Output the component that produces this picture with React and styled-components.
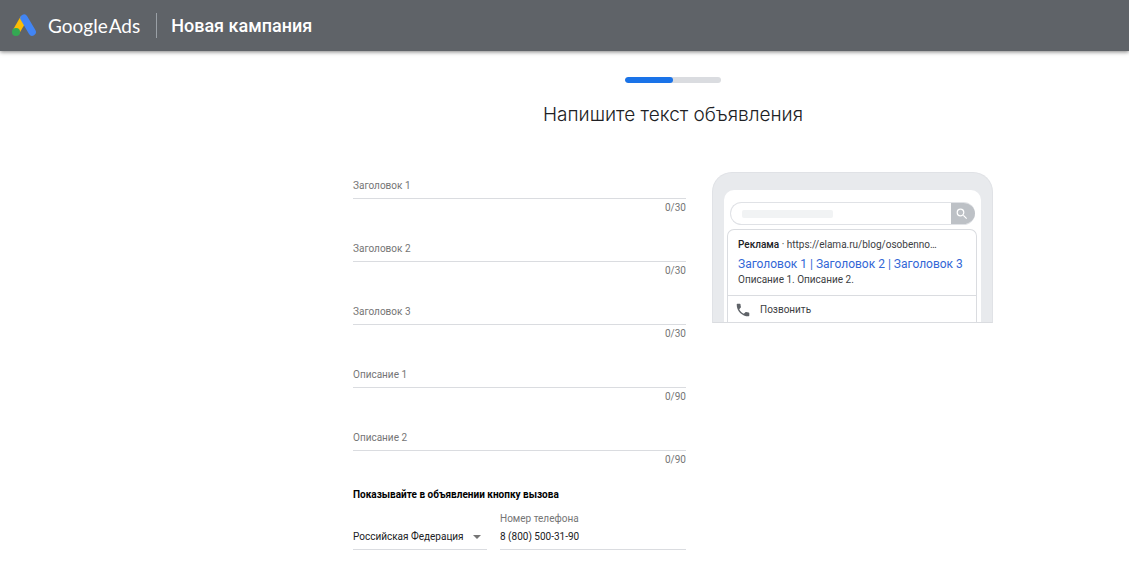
import React, { useState } from "react";
import styled, { createGlobalStyle } from "styled-components";

const GlobalStyle = createGlobalStyle`
    * {
        box-sizing: border-box;
    }
    body {
        margin: 0;
        background-color: #fff;
        color: #202124;
        font-family: Roboto, "Liberation Sans", sans-serif;
        font-size: 10px;
        line-height: 14px;
    }
    input,
    select,
    button {
        font: inherit;
        color: inherit;
    }
`;

const Header = styled.header`
    display: flex;
    align-items: center;
    height: 51px;
    padding: 0 12px;
    background-color: #5f6368;
    color: #fff;
    box-shadow: 0 1px 4px rgba(0, 0, 0, 0.5);
`;

const Logo = styled.a`
    display: flex;
    align-items: center;
    color: inherit;
    text-decoration: none;
`;

const LogoText = styled.span`
    display: flex;
    gap: 1px;
    margin-left: 11px;
    font-family: Lato, sans-serif;
    font-size: 19px;
    line-height: 24px;
`;

const HeaderTitle = styled.h1`
    margin: 0 0 0 16px;
    padding-left: 14px;
    border-left: 1px solid #9aa0a6;
    font-size: 18px;
    font-weight: 500;
    line-height: 25px;
`;

const Main = styled.main`
    padding: 26px 0 24px 217px;
`;

const Content = styled.div`
    max-width: 640px;
    margin: 0 auto;
`;

const Progress = styled.div`
    width: 96px;
    height: 6px;
    margin: 0 auto;
    border-radius: 3px;
    background-color: #dadce0;
    overflow: hidden;
`;

const ProgressBar = styled.div`
    width: ${(props) => (props.$step / props.$total) * 100}%;
    height: 100%;
    border-radius: 3px;
    background-color: #1a73e8;
`;

const StepTitle = styled.h2`
    margin: 19px 0 44px;
    font-family: Inter, Roboto, sans-serif;
    font-size: 19px;
    font-weight: 300;
    line-height: 26px;
    text-align: center;
`;

const Columns = styled.div`
    display: flex;
    align-items: flex-start;
    gap: 26px;
`;

const Form = styled.form`
    flex: 1;
    min-width: 0;
`;

const Field = styled.div`
    position: relative;
    height: 63px;
    color: #757575;
`;

const FieldLabel = styled.label`
    position: absolute;
    top: ${(props) => (props.$raised ? "-8px" : "7px")};
    left: 0;
    pointer-events: none;
`;

const TextInput = styled.input`
    display: block;
    width: 100%;
    height: 27px;
    padding: 0;
    border: none;
    border-bottom: 1px solid #dadce0;
    border-radius: 0;
    background-color: transparent;
    color: #202124;
    outline: none;

    &:focus {
        border-bottom-color: #1a73e8;
    }
`;

const Counter = styled.div`
    margin-top: 2px;
    text-align: right;
`;

const PhoneGroup = styled.fieldset`
    min-width: 0;
    margin: 0;
    padding: 1px 0 0;
    border: none;
`;

const PhoneLegend = styled.legend`
    padding: 1px 0 0;
    font-weight: 700;
    color: #000;
`;

const PhoneRow = styled.div`
    display: flex;
    align-items: flex-end;
    gap: 13px;
    margin-top: 9px;
`;

const SelectBox = styled.div`
    display: flex;
    align-items: center;
    flex: 0 0 134px;
    height: 24px;
    padding-bottom: 2px;
    border-bottom: 1px solid #dadce0;
`;

const Select = styled.select`
    appearance: none;
    width: 100%;
    margin-right: -14px;
    padding: 0 14px 0 0;
    border: none;
    background-color: transparent;
    outline: none;
`;

const Arrow = styled.span`
    margin-right: 5px;
    border: 4px solid transparent;
    border-top-color: #757575;
    border-bottom: none;
    pointer-events: none;
`;

const PhoneField = styled.div`
    flex: 1;
    min-width: 0;
`;

const PhoneLabel = styled.label`
    display: block;
    color: #757575;
`;

const PhoneInput = styled(TextInput)`
    height: 24px;
    padding-bottom: 2px;
`;

const Phone = styled.aside`
    flex: 0 0 281px;
    padding: 17px 11px 0;
    border: 1px solid #e0e2e6;
    border-bottom-color: #dadce0;
    border-radius: 20px 20px 0 0;
    background-color: #e8eaed;
`;

const Screen = styled.div`
    padding: 12px 4px 0 3px;
    border-radius: 10px 10px 0 0;
    background-color: #fff;
`;

const SearchBar = styled.div`
    display: flex;
    align-items: center;
    justify-content: space-between;
    height: 23px;
    margin: 0 2px 4px 3px;
    padding-left: 11px;
    border: 1px solid #e0e2e6;
    border-right: none;
    border-radius: 12px;
    overflow: hidden;
`;

const SearchText = styled.div`
    width: 91px;
    height: 8px;
    border-radius: 2px;
    background-color: #f1f3f4;
`;

const SearchButton = styled.button`
    display: flex;
    align-items: center;
    justify-content: center;
    width: 24px;
    height: 23px;
    padding: 0 2px 0 0;
    border: none;
    background-color: #bdc1c6;
`;

const AdCard = styled.div`
    border: 1px solid #dadce0;
    border-bottom: none;
    border-radius: 7px 7px 0 0;
    color: #3c4043;
`;

const AdBody = styled.div`
    padding: 8px 10px;
`;

const AdUrl = styled.div`
    white-space: nowrap;
    overflow: hidden;
    text-overflow: ellipsis;
`;

const AdBadge = styled.span`
    font-weight: 500;
    color: #202124;
`;

const AdTitle = styled.a`
    display: block;
    margin-top: 3px;
    font-size: 12px;
    line-height: 18px;
    color: #3367d6;
    text-decoration: none;
`;

const CallButton = styled.button`
    display: flex;
    align-items: center;
    gap: 10px;
    width: 100%;
    height: 27px;
    padding: 1px 8px 0;
    border: none;
    border-top: 1px solid #dadce0;
    background-color: transparent;
`;

const FIELDS = [
    { name: "headline1", label: "Заголовок 1", max: 30 },
    { name: "headline2", label: "Заголовок 2", max: 30 },
    { name: "headline3", label: "Заголовок 3", max: 30 },
    { name: "description1", label: "Описание 1", max: 90 },
    { name: "description2", label: "Описание 2", max: 90 },
];

const AdsIcon = () => (
    <svg width="25" height="24" viewBox="0 0 25 24" aria-hidden="true">
        <path d="M3.9 18 11.8 4.4" stroke="#fbbc04" strokeWidth="7.4" />
        <path
            d="M12 4.2 20.2 18"
            stroke="#4285f4"
            strokeWidth="7.4"
            strokeLinecap="round"
        />
        <circle cx="4" cy="18" r="4" fill="#34a853" />
    </svg>
);

const SearchIcon = () => (
    <svg width="12" height="12" viewBox="2 2 20 20" aria-hidden="true">
        <path
            fill="#fff"
            d="M15.5 14h-.79l-.28-.27A6.47 6.47 0 0 0 16 9.5 6.5 6.5 0 1 0 9.5 16c1.61 0 3.09-.59 4.23-1.57l.27.28v.79l5 4.99L20.49 19l-4.99-5zm-6 0C7.01 14 5 11.99 5 9.5S7.01 5 9.5 5 14 7.01 14 9.5 11.99 14 9.5 14z"
        />
    </svg>
);

const CallIcon = () => (
    <svg width="14" height="14" viewBox="2 2 20 20" aria-hidden="true">
        <path
            fill="#5f6368"
            d="M6.62 10.79c1.44 2.83 3.76 5.14 6.59 6.59l2.2-2.2c.27-.27.67-.36 1.02-.24 1.12.37 2.33.57 3.57.57.55 0 1 .45 1 1V20c0 .55-.45 1-1 1-9.39 0-17-7.61-17-17 0-.55.45-1 1-1h3.5c.55 0 1 .45 1 1 0 1.25.2 2.45.57 3.57.11.35.03.74-.25 1.02l-2.2 2.2z"
        />
    </svg>
);

const App = () => {
    const [values, setValues] = useState({});
    const [phone, setPhone] = useState("8 (800) 500-31-90");

    const textOf = (index) => values[FIELDS[index].name] || FIELDS[index].label;

    return (
        <>
            <GlobalStyle />
            <Header>
                <Logo href="#">
                    <AdsIcon />
                    <LogoText>
                        <span>Google</span>
                        <span>Ads</span>
                    </LogoText>
                </Logo>
                <HeaderTitle>Новая кампания</HeaderTitle>
            </Header>
            <Main>
                <Content>
                    <Progress>
                        <ProgressBar $step={1} $total={2} />
                    </Progress>
                    <StepTitle>Напишите текст объявления</StepTitle>
                    <Columns>
                        <Form>
                            {FIELDS.map(({ name, label, max }) => {
                                const value = values[name] || "";
                                return (
                                    <Field key={name}>
                                        <FieldLabel
                                            htmlFor={name}
                                            $raised={value !== ""}
                                        >
                                            {label}
                                        </FieldLabel>
                                        <TextInput
                                            id={name}
                                            maxLength={max}
                                            value={value}
                                            onChange={(e) =>
                                                setValues({
                                                    ...values,
                                                    [name]: e.target.value,
                                                })
                                            }
                                        />
                                        <Counter>{`${value.length}/${max}`}</Counter>
                                    </Field>
                                );
                            })}
                            <PhoneGroup>
                                <PhoneLegend>
                                    Показывайте в объявлении кнопку вызова
                                </PhoneLegend>
                                <PhoneRow>
                                    <SelectBox>
                                        <Select aria-label="Страна">
                                            <option>Российская Федерация</option>
                                        </Select>
                                        <Arrow />
                                    </SelectBox>
                                    <PhoneField>
                                        <PhoneLabel htmlFor="phone">
                                            Номер телефона
                                        </PhoneLabel>
                                        <PhoneInput
                                            id="phone"
                                            type="tel"
                                            value={phone}
                                            onChange={(e) =>
                                                setPhone(e.target.value)
                                            }
                                        />
                                    </PhoneField>
                                </PhoneRow>
                            </PhoneGroup>
                        </Form>
                        <Phone>
                            <Screen>
                                <SearchBar>
                                    <SearchText />
                                    <SearchButton type="button" aria-label="Поиск">
                                        <SearchIcon />
                                    </SearchButton>
                                </SearchBar>
                                <AdCard>
                                    <AdBody>
                                        <AdUrl>
                                            <AdBadge>Реклама</AdBadge>
                                            {" · https://elama.ru/blog/osobenno…"}
                                        </AdUrl>
                                        <AdTitle href="#">
                                            {`${textOf(0)} | ${textOf(1)} | ${textOf(2)}`}
                                        </AdTitle>
                                        <div>{`${textOf(3)}. ${textOf(4)}.`}</div>
                                    </AdBody>
                                    <CallButton type="button">
                                        <CallIcon />
                                        Позвонить
                                    </CallButton>
                                </AdCard>
                            </Screen>
                        </Phone>
                    </Columns>
                </Content>
            </Main>
        </>
    );
};

export default App;
